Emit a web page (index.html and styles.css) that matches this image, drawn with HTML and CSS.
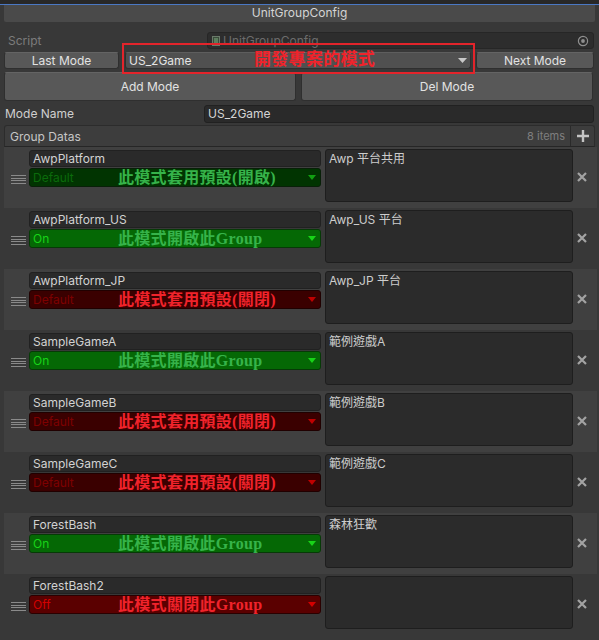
FILE: index.html
```html
<!DOCTYPE html>
<html>
<head>
<meta charset="utf-8">
<link rel="stylesheet" href="styles.css">
</head>
<body>
<div class="topstrip"></div>
<div class="blueline"></div>
<div class="titlewrap"><div class="titlebar">UnitGroupConfig</div></div>

<div class="row script-row">
  <div class="label dim">Script</div>
  <div class="objfield">
    <svg class="scripticon" width="8" height="10" viewBox="0 0 8 10"><rect x="0.5" y="0.5" width="7" height="9" fill="#3a4a3a" stroke="#6a7a6a"/><rect x="2" y="2" width="4" height="6" fill="#5d7d5d"/></svg>
    <span>UnitGroupConfig</span>
    <svg class="target" width="12" height="12" viewBox="0 0 12 12"><circle cx="6" cy="6" r="4.6" fill="none" stroke="#8f8f8f" stroke-width="1.2"/><circle cx="6" cy="6" r="1.9" fill="#8f8f8f"/></svg>
  </div>
</div>

<div class="row mode-row">
  <div class="btn lastbtn">Last Mode</div>
  <div class="popup">
    <span>US_2Game</span>
    <svg class="arrow" width="9" height="5" viewBox="0 0 9 5"><path d="M0 0H9L4.5 5Z" fill="#c8c8c8"/></svg>
    <div class="redbox"></div>
    <div class="note red big">開發專案的模式</div>
  </div>
  <div class="btn nextbtn">Next Mode</div>
</div>

<div class="row add-row">
  <div class="btn bigbtn">Add Mode</div>
  <div class="btn bigbtn">Del Mode</div>
</div>

<div class="row name-row">
  <div class="label">Mode Name</div>
  <div class="textfield">US_2Game</div>
</div>

<div class="list">
  <div class="listhead">
    <span class="lh-title">Group Datas</span>
    <span class="lh-count">8 items</span>
    <div class="lh-plus"><svg width="12" height="12" viewBox="0 0 12 12"><path d="M4.8 0H7.2V4.8H12V7.2H7.2V12H4.8V7.2H0V4.8H4.8Z" fill="#c4c4c4"/></svg></div>
  </div>
  <div class="listbody">

    <div class="item alt">
      <div class="handle"><i></i><i></i><i></i><i></i></div>
      <div class="col">
        <div class="namefield">AwpPlatform</div>
        <div class="state g-def"><span>Default</span><b class="tri"></b><div class="note green">此模式套用預設(開啟)</div></div>
      </div>
      <div class="desc">Awp 平台共用</div>
      <div class="del"><svg width="10" height="10" viewBox="0 0 10 10"><path d="M1 1L9 9M9 1L1 9" stroke="#a3a3a3" stroke-width="2.2"/></svg></div>
    </div>

    <div class="item">
      <div class="handle"><i></i><i></i><i></i><i></i></div>
      <div class="col">
        <div class="namefield">AwpPlatform_US</div>
        <div class="state g-on"><span>On</span><b class="tri"></b><div class="note green">此模式開啟此Group</div></div>
      </div>
      <div class="desc">Awp_US 平台</div>
      <div class="del"><svg width="10" height="10" viewBox="0 0 10 10"><path d="M1 1L9 9M9 1L1 9" stroke="#a3a3a3" stroke-width="2.2"/></svg></div>
    </div>

    <div class="item alt">
      <div class="handle"><i></i><i></i><i></i><i></i></div>
      <div class="col">
        <div class="namefield">AwpPlatform_JP</div>
        <div class="state r-def"><span>Default</span><b class="tri"></b><div class="note red">此模式套用預設(關閉)</div></div>
      </div>
      <div class="desc">Awp_JP 平台</div>
      <div class="del"><svg width="10" height="10" viewBox="0 0 10 10"><path d="M1 1L9 9M9 1L1 9" stroke="#a3a3a3" stroke-width="2.2"/></svg></div>
    </div>

    <div class="item">
      <div class="handle"><i></i><i></i><i></i><i></i></div>
      <div class="col">
        <div class="namefield">SampleGameA</div>
        <div class="state g-on"><span>On</span><b class="tri"></b><div class="note green">此模式開啟此Group</div></div>
      </div>
      <div class="desc">範例遊戲A</div>
      <div class="del"><svg width="10" height="10" viewBox="0 0 10 10"><path d="M1 1L9 9M9 1L1 9" stroke="#a3a3a3" stroke-width="2.2"/></svg></div>
    </div>

    <div class="item alt">
      <div class="handle"><i></i><i></i><i></i><i></i></div>
      <div class="col">
        <div class="namefield">SampleGameB</div>
        <div class="state r-def"><span>Default</span><b class="tri"></b><div class="note red">此模式套用預設(關閉)</div></div>
      </div>
      <div class="desc">範例遊戲B</div>
      <div class="del"><svg width="10" height="10" viewBox="0 0 10 10"><path d="M1 1L9 9M9 1L1 9" stroke="#a3a3a3" stroke-width="2.2"/></svg></div>
    </div>

    <div class="item">
      <div class="handle"><i></i><i></i><i></i><i></i></div>
      <div class="col">
        <div class="namefield">SampleGameC</div>
        <div class="state r-def"><span>Default</span><b class="tri"></b><div class="note red">此模式套用預設(關閉)</div></div>
      </div>
      <div class="desc">範例遊戲C</div>
      <div class="del"><svg width="10" height="10" viewBox="0 0 10 10"><path d="M1 1L9 9M9 1L1 9" stroke="#a3a3a3" stroke-width="2.2"/></svg></div>
    </div>

    <div class="item alt">
      <div class="handle"><i></i><i></i><i></i><i></i></div>
      <div class="col">
        <div class="namefield">ForestBash</div>
        <div class="state g-on"><span>On</span><b class="tri"></b><div class="note green">此模式開啟此Group</div></div>
      </div>
      <div class="desc">森林狂歡</div>
      <div class="del"><svg width="10" height="10" viewBox="0 0 10 10"><path d="M1 1L9 9M9 1L1 9" stroke="#a3a3a3" stroke-width="2.2"/></svg></div>
    </div>

    <div class="item">
      <div class="handle"><i></i><i></i><i></i><i></i></div>
      <div class="col">
        <div class="namefield">ForestBash2</div>
        <div class="state r-off"><span>Off</span><b class="tri"></b><div class="note red">此模式關閉此Group</div></div>
      </div>
      <div class="desc"></div>
      <div class="del"><svg width="10" height="10" viewBox="0 0 10 10"><path d="M1 1L9 9M9 1L1 9" stroke="#a3a3a3" stroke-width="2.2"/></svg></div>
    </div>

  </div>
</div>
</body>
</html>
```

FILE: styles.css
```css
* { box-sizing: border-box; }
html, body {
  margin: 0;
  background: #383838;
  width: 599px;
  height: 640px;
  overflow: hidden;
  font-family: Inter, "Noto Sans CJK TC", sans-serif;
  font-size: 12px;
  color: #cfcfcf;
}
.topstrip { height: 4px; background: #282828; }
.blueline { height: 1px; background: #4a78c4; }
.titlewrap { padding: 0 4px; height: 18px; background: #383838; }
.titlebar {
  height: 17px;
  background: #4a4a4a;
  border-radius: 0 0 2px 2px;
  text-align: center;
  line-height: 16px;
  color: #d4d4d4;
}
.row { display: flex; align-items: center; }
.label { line-height: 16px; }
.dim { color: #7c7c7c; }

.script-row { margin-top: 9px; height: 17px; padding-left: 8px; padding-right: 5px; }
.script-row .label { width: 199px; }
.objfield {
  flex: 1;
  height: 17px;
  background: #2d2d2d;
  border: 1px solid #262626;
  border-radius: 3px;
  display: flex;
  align-items: center;
  padding-left: 4px;
  color: #6c6c6c;
}
.scripticon { margin-right: 3px; }
.objfield span { flex: 1; }
.target { margin-right: 4px; }

.mode-row { margin-top: 3px; height: 17px; padding-left: 4px; }
.btn {
  height: 17px;
  background: #585858;
  border: 1px solid #2f2f2f;
  border-top-color: #646464;
  border-radius: 3px;
  color: #e2e2e2;
  text-align: center;
  line-height: 15px;
}
.lastbtn { width: 115px; }
.nextbtn { width: 118px; margin-left: 5px; }
.popup {
  position: relative;
  width: 346px;
  margin-left: 6px;
  height: 17px;
  background: #505050;
  border: 1px solid #2f2f2f;
  border-top-color: #5e5e5e;
  border-radius: 3px;
  color: #e4e4e4;
  display: flex;
  align-items: center;
  padding-left: 3px;
}
.popup span { flex: 1; }
.popup .arrow { margin-right: 3px; }
.redbox {
  position: absolute;
  left: -4px; top: -10px;
  width: 353px; height: 31px;
  border: 2px solid #e3242b;
}
.note {
  position: absolute;
  font-family: "Liberation Serif", "Noto Sans CJK TC", serif;
  font-weight: bold;
  font-size: 16px;
  line-height: 18px;
  white-space: nowrap;
  letter-spacing: 0.3px;
}
.note.big { left: 128px; top: -2px; font-size: 17px; }
.note.red { color: #f0232b; }
.note.green { color: #36b34a; }

.add-row { margin-top: 3px; padding: 0 6px 0 4px; gap: 5px; }
.bigbtn { flex: 1; height: 29px; line-height: 27px; }

.name-row { margin-top: 4px; height: 18px; padding-left: 5px; padding-right: 5px; }
.name-row .label { width: 199px; }
.textfield {
  flex: 1;
  height: 18px;
  background: #2a2a2a;
  border: 1px solid #212121;
  border-radius: 3px;
  padding-left: 3px;
  line-height: 16px;
  color: #d4d4d4;
}

.list { margin: 2px 4px 0 4px; }
.listhead {
  height: 22px;
  background: #3d3d3d;
  border: 1px solid #2c2c2c;
  border-bottom-color: #262626;
  border-radius: 3px 3px 0 0;
  display: flex;
  align-items: center;
  padding-left: 5px;
}
.lh-title { flex: 1; color: #c6c6c6; }
.lh-count { color: #7f7f7f; font-size: 11px; margin-right: 5px; }
.lh-plus {
  width: 24px; height: 20px;
  border-left: 1px solid #2a2a2a;
  display: flex; align-items: center; justify-content: center;
}
.listbody { background: #383838; }
.item {
  height: 61px;
  display: flex;
  padding-top: 2px;
  background: #383838;
}
.item.alt { background: #404040; margin-right: -2px; }
.handle {
  width: 25px;
  padding: 26px 0 0 7px;
  display: flex;
  flex-direction: column;
  gap: 1.7px;
}
.handle i { display: block; width: 15px; height: 1px; background: #8a8a8a; }
.col { width: 292px; padding-top: 1px; display: flex; flex-direction: column; gap: 1px; }
.namefield {
  height: 17px;
  background: #2a2a2a;
  border: 1px solid #212121;
  border-radius: 3px;
  padding-left: 3px;
  line-height: 15px;
  color: #d2d2d2;
}
.state {
  position: relative;
  height: 19px;
  border: 1px solid #111;
  border-radius: 3px;
  padding-left: 3px;
  display: flex;
  align-items: center;
}
.state span { flex: 1; }
.state .note { left: 88px; top: 0px; }
.tri {
  width: 0; height: 0;
  border-left: 4.5px solid transparent;
  border-right: 4.5px solid transparent;
  border-top: 5px solid currentColor;
  margin-right: 4px;
}
.g-def { background: #013401; color: #0b6b0b; border-color: #082008; }
.g-def .tri { color: #11a011; }
.g-on { background: #056805; color: #18d418; border-color: #063a06; }
.r-def { background: #3a0000; color: #7e0000; border-color: #200000; }
.r-def .tri { color: #c00000; }
.r-off { background: #5a0000; color: #d40000; border-color: #2a0000; }
.desc {
  width: 248px;
  height: 53px;
  margin-left: 4px;
  background: #2b2b2b;
  border: 1px solid #1e1e1e;
  border-radius: 3px;
  padding: 1px 3px;
  line-height: 16px;
  color: #cdcdcd;
}
.del {
  width: 20px;
  padding-top: 23px;
  padding-left: 4px;
  display: flex;
  align-items: flex-start;
}
```
